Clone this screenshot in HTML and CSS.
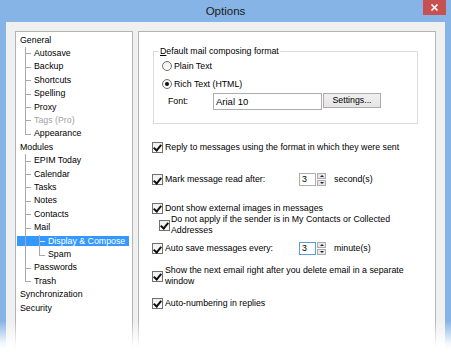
FILE: index.html
```html
<!DOCTYPE html>
<html lang="en">
<head>
    <meta charset="UTF-8">
    <meta name="viewport" content="width=device-width, initial-scale=1.0">
    <title>Options</title>
    <link rel="stylesheet" href="styles.css">
</head>
<body>
    <div class="window">
        <div class="titlebar">
            <span></span>
            <span class="title">Options</span>
            <button class="close">
                <svg width="23" height="15" viewBox="0 0 23 15"><path d="M8.5 4.5l6 6M14.5 4.5l-6 6" stroke="#fff" stroke-width="1.7" fill="none"/></svg>
            </button>
        </div>

        <div class="dialog">
            <!-- left navigation tree -->
            <div class="tree">
                <div class="node">General</div>
                <div class="branch">
                    <div class="leaf">Autosave</div>
                    <div class="leaf">Backup</div>
                    <div class="leaf">Shortcuts</div>
                    <div class="leaf">Spelling</div>
                    <div class="leaf">Proxy</div>
                    <div class="leaf disabled">Tags (Pro)</div>
                    <div class="leaf">Appearance</div>
                </div>
                <div class="node">Modules</div>
                <div class="branch">
                    <div class="leaf">EPIM Today</div>
                    <div class="leaf">Calendar</div>
                    <div class="leaf">Tasks</div>
                    <div class="leaf">Notes</div>
                    <div class="leaf">Contacts</div>
                    <div class="leaf">Mail</div>
                    <div class="branch">
                        <div class="leaf selected">Display &amp; Compose</div>
                        <div class="leaf">Spam</div>
                    </div>
                    <div class="leaf">Passwords</div>
                    <div class="leaf">Trash</div>
                </div>
                <div class="node">Synchronization</div>
                <div class="node">Security</div>
            </div>

            <!-- settings page -->
            <div class="page">
                <fieldset class="group">
                    <legend><u>D</u>efault mail composing format</legend>
                    <label class="radio-row"><span class="radio"></span>Plain Text</label>
                    <label class="radio-row"><span class="radio on"></span>Rich Text (HTML)</label>
                    <div class="font-row">
                        <span class="font-label">Font:</span>
                        <span class="textbox">Arial 10</span>
                        <span class="button">Settings...</span>
                    </div>
                </fieldset>

                <div class="opt reply">
                    <span class="check"></span>
                    <span class="opt-text">Reply to messages using the format in which they were sent</span>
                </div>

                <div class="opt mark">
                    <span class="check"></span>
                    <span class="opt-label">Mark message read after:</span>
                    <span class="spin">
                        <span class="spin-box">3</span>
                        <span class="spin-btns"><span class="up"></span><span class="down"></span></span>
                    </span>
                    <span class="unit">second(s)</span>
                </div>

                <div class="opt images">
                    <span class="check"></span>
                    <span class="opt-text">Dont show external images in messages</span>
                </div>
                <div class="opt sub">
                    <span class="check"></span>
                    <span class="opt-text">Do not apply if the sender is in My Contacts or Collected Addresses</span>
                </div>

                <div class="opt autosave">
                    <span class="check"></span>
                    <span class="opt-label">Auto save messages every:</span>
                    <span class="spin">
                        <span class="spin-box focus">3</span>
                        <span class="spin-btns"><span class="up"></span><span class="down"></span></span>
                    </span>
                    <span class="unit">minute(s)</span>
                </div>

                <div class="opt next">
                    <span class="check"></span>
                    <span class="opt-text">Show the next email right after you delete email in a separate window</span>
                </div>

                <div class="opt numbering">
                    <span class="check"></span>
                    <span class="opt-text">Auto-numbering in replies</span>
                </div>
            </div>
        </div>

        <div class="fade"></div>
    </div>
</body>
</html>
```

FILE: styles.css
```css
/* General */
* {
    box-sizing: border-box;
}

body {
    margin: 0;
    font-family: "Liberation Sans", Arial, sans-serif;
    font-size: 8.8px;
    color: #000;
    background: #fff;
    overflow: hidden;
}

.window {
    position: relative;
    width: 451px;
    height: 353px;
    background: #87b4e6;
    display: flex;
    flex-direction: column;
    overflow: hidden;
}

/* Title bar */
.titlebar {
    flex: none;
    height: 22px;
    display: grid;
    grid-template-columns: 1fr auto 1fr;
    align-items: start;
}

.title {
    font-size: 11.5px;
    line-height: 23px;
    color: #1a1a1a;
}

.close {
    justify-self: end;
    width: 23px;
    height: 15px;
    margin-right: 5px;
    padding: 0;
    border: none;
    background: #c75050;
    display: flex;
}

/* Dialog body */
.dialog {
    flex: 1;
    margin: 0 6px;
    padding: 9px 9px 0;
    background: #f0f0f0;
    display: flex;
    gap: 5px;
}

/* Tree */
.tree {
    width: 118px;
    flex: none;
    background: #fff;
    border: 1px solid #b4b4b4;
    border-bottom: none;
    padding: 1.5px 0 0 4px;
    line-height: 13.4px;
    white-space: nowrap;
}

.branch {
    position: relative;
    margin-left: 5px;
}

.branch::before {
    content: '';
    position: absolute;
    left: 0;
    top: 0;
    bottom: 6.7px;
    width: 1px;
    background: #a9a9a9;
    z-index: 1;
}

.branch .branch {
    margin-left: 14px;
}

.leaf {
    position: relative;
    padding-left: 9px;
}

.leaf::before {
    content: '';
    position: absolute;
    left: 0;
    top: 6.5px;
    width: 6px;
    height: 1px;
    background: #a9a9a9;
}

.leaf.disabled {
    color: #a3a3a3;
}

.leaf.selected {
    margin: 0 3px 0 -22px;
    padding-left: 31px;
    color: #fff;
    background: linear-gradient(transparent 1.5px, #3399ff 1.5px, #3399ff calc(100% - 1.5px), transparent calc(100% - 1.5px));
}

.leaf.selected::before {
    left: 22px;
    background: #d4e8fc;
}

/* Settings page */
.page {
    flex: 1;
    background: #fff;
    border: 1px solid #b4b4b4;
    border-bottom: none;
    padding: 0 20px 0 13px;
}

.group {
    margin: 13px -3px 0 1px;
    padding: 0 0 13px 8px;
    border: 1px solid #dcdcdc;
    min-width: 0;
}

.group legend {
    margin-left: -3px;
    padding: 0 1px;
    line-height: 12px;
}

.radio-row {
    display: flex;
    align-items: center;
    height: 12px;
    margin-top: 3px;
}

.radio-row + .radio-row {
    margin-top: 6px;
}

.radio {
    width: 10px;
    height: 10px;
    margin-right: 2px;
    border: 1px solid #707070;
    border-radius: 50%;
    background: linear-gradient(#f0f0f0, #fdfdfd);
    display: flex;
    align-items: center;
    justify-content: center;
}

.radio.on::after {
    content: '';
    width: 4px;
    height: 4px;
    border-radius: 50%;
    background: #111;
}

.font-row {
    display: flex;
    align-items: flex-start;
    margin-top: 3px;
}

.font-label {
    width: 45px;
    margin-left: 6px;
    line-height: 17px;
}

.textbox {
    width: 109px;
    height: 17px;
    padding-left: 2px;
    border: 1px solid #abadb3;
    line-height: 15px;
    font-size: 9.5px;
}

.button {
    width: 58px;
    height: 15px;
    margin-left: 1px;
    border: 1px solid #acacac;
    background: linear-gradient(#f0f0f0, #e5e5e5);
    text-align: center;
    line-height: 13px;
}

/* Option rows */
.opt {
    display: flex;
    align-items: center;
    min-height: 12px;
    line-height: 11px;
}

.check {
    flex: none;
    width: 11px;
    height: 11px;
    margin-right: 2px;
    border: 1px solid #707070;
    background: linear-gradient(#f0f0f0, #fdfdfd);
    display: flex;
    justify-content: center;
}

.check::after {
    content: '';
    width: 3px;
    height: 6px;
    margin-top: 0.5px;
    border: solid #111;
    border-width: 0 2px 2px 0;
    transform: rotate(40deg);
}

.opt-label {
    width: 134px;
}

.spin {
    display: flex;
    height: 13px;
}

.spin-box {
    width: 17px;
    padding-left: 2px;
    border: 1px solid #abadb3;
    line-height: 11px;
}

.spin-box.focus {
    border-color: #569de5;
}

.spin-btns {
    width: 9px;
    margin-left: 1px;
    display: flex;
    flex-direction: column;
    gap: 1px;
}

.spin-btns span {
    flex: 1;
    border: 1px solid #acacac;
    background: #e8e8e8;
    display: flex;
    align-items: center;
    justify-content: center;
}

.spin-btns .up::before {
    content: '';
    border: 2px solid transparent;
    border-top: none;
    border-bottom-color: #222;
}

.spin-btns .down::before {
    content: '';
    border: 2px solid transparent;
    border-bottom: none;
    border-top-color: #222;
}

.unit {
    margin-left: 8px;
}

.reply {
    margin-top: 17px;
}

.mark {
    margin-top: 20px;
}

.images {
    margin-top: 16px;
}

.sub {
    padding-left: 7px;
}

.sub .check {
    margin-right: 1px;
}

.autosave {
    margin-top: 6px;
}

.next,
.numbering {
    margin-top: 10px;
}

/* bottom edge of the screenshot fades out */
.fade {
    position: absolute;
    left: 0;
    right: 0;
    bottom: 0;
    height: 32px;
    background: linear-gradient(rgba(255, 255, 255, 0), rgba(255, 255, 255, 0.9) 70%, #fff 90%);
}
```
